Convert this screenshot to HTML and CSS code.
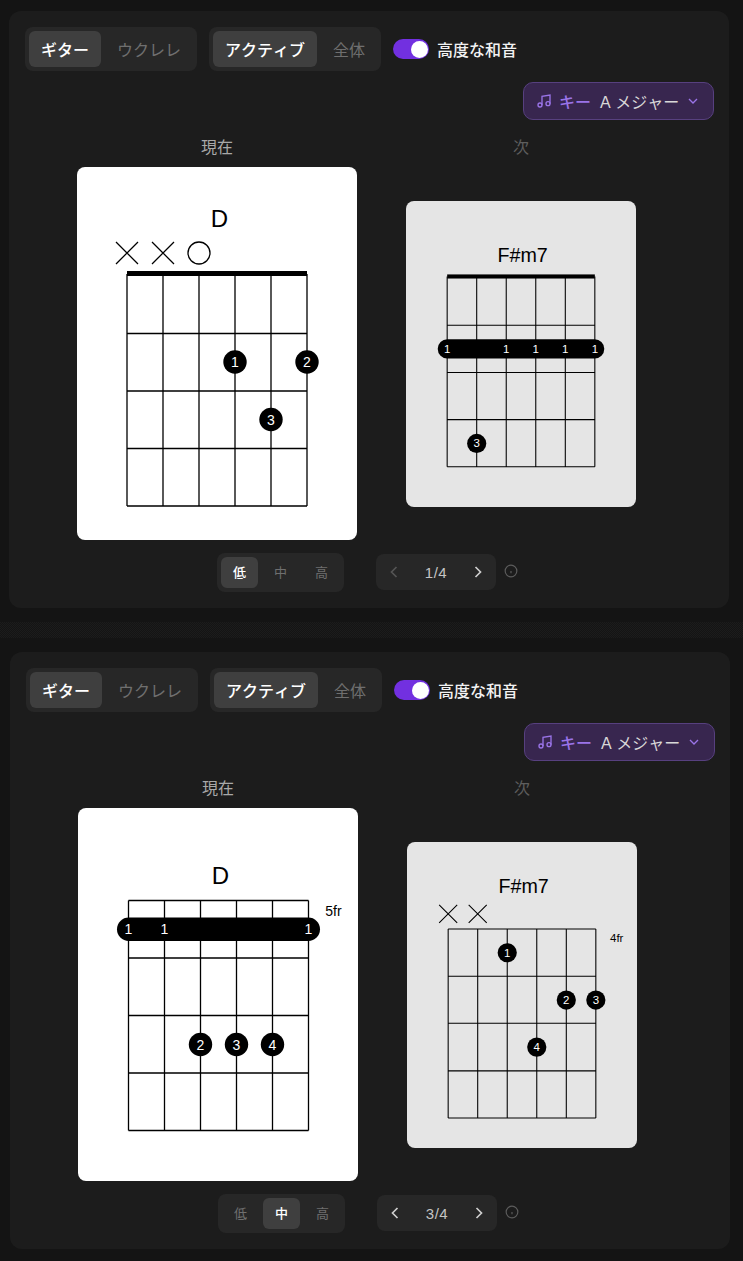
FILE: index.html
```html
<!DOCTYPE html>
<html lang="ja">
<head>
    <meta charset="UTF-8">
    <title>コード</title>
    <link rel="stylesheet" href="styles.css">
</head>
<body>

<section class="panel panel-first">
    <div class="toolbar">
        <div class="seg">
            <button class="seg-btn active">ギター</button>
            <button class="seg-btn">ウクレレ</button>
        </div>
        <div class="seg">
            <button class="seg-btn active">アクティブ</button>
            <button class="seg-btn">全体</button>
        </div>
        <span class="toggle"><span class="knob"></span></span>
        <span class="toggle-label">高度な和音</span>
    </div>
    <div class="key-row">
        <button class="key-btn">
            <svg class="key-icon" viewBox="0 0 24 24"><path d="M9 18V5l12-2v13"/><circle cx="6" cy="18" r="3"/><circle cx="18" cy="16" r="3"/></svg>
            <span class="key-word">キー</span>
            <span class="key-name">A メジャー</span>
            <svg class="key-chevron" viewBox="0 0 24 24"><path d="m6 9 6 6 6-6"/></svg>
        </button>
    </div>
    <div class="chords">
        <div class="chord-label">現在</div>
        <div class="chord-label next">次</div>
        <div class="card">
            <svg class="diagram" viewBox="0 0 280 373">
                <text class="title" x="142.5" y="51">D</text>
                <path class="mute" d="M39 75l22 22M61 75l-22 22M75 75l22 22M97 75l-22 22"/>
                <circle class="open" cx="122" cy="86" r="11"/>
                <rect class="nut" x="50" y="104" width="180" height="5"/>
                <path class="grid" d="M50 107V339M86 107V339M122 107V339M158 107V339M194 107V339M230 107V339M50 166.5H230M50 224H230M50 281.5H230M50 339H230"/>
                <circle class="dot" cx="158" cy="195" r="11.7"/><text class="num" x="158" y="195">1</text>
                <circle class="dot" cx="230" cy="195" r="11.7"/><text class="num" x="230" y="195">2</text>
                <circle class="dot" cx="194" cy="252.5" r="11.7"/><text class="num" x="194" y="252.5">3</text>
            </svg>
        </div>
        <div class="card card-next">
            <svg class="diagram" viewBox="0 0 280 373">
                <text class="title" x="142" y="66">F#m7</text>
                <rect class="nut" x="50" y="89.5" width="180" height="5"/>
                <path class="grid" d="M50 92V324M86 92V324M122 92V324M158 92V324M194 92V324M230 92V324M50 151.5H230M50 209H230M50 266.5H230M50 324H230"/>
                <rect class="barre" x="38.5" y="168.5" width="203" height="23.5" rx="11.7"/>
                <text class="num" x="50" y="180">1</text>
                <text class="num" x="122" y="180">1</text>
                <text class="num" x="158" y="180">1</text>
                <text class="num" x="194" y="180">1</text>
                <text class="num" x="230" y="180">1</text>
                <circle class="dot" cx="86" cy="295.5" r="11.7"/><text class="num" x="86" y="295.5">3</text>
            </svg>
        </div>
    </div>
    <div class="footer">
        <div class="seg seg-small">
            <button class="seg-btn active">低</button>
            <button class="seg-btn">中</button>
            <button class="seg-btn">高</button>
        </div>
        <div class="pager">
            <svg class="pager-icon off" viewBox="0 0 24 24"><path d="m15 18-6-6 6-6"/></svg>
            <span class="pager-text">1/4</span>
            <svg class="pager-icon" viewBox="0 0 24 24"><path d="m9 18 6-6-6-6"/></svg>
        </div>
        <svg class="info" viewBox="0 0 24 24"><circle cx="12" cy="12" r="10"/><path d="M12 16v-4M12 8h.01"/></svg>
    </div>
</section>

<div class="divider"></div>

<section class="panel panel-second">
    <div class="toolbar">
        <div class="seg">
            <button class="seg-btn active">ギター</button>
            <button class="seg-btn">ウクレレ</button>
        </div>
        <div class="seg">
            <button class="seg-btn active">アクティブ</button>
            <button class="seg-btn">全体</button>
        </div>
        <span class="toggle"><span class="knob"></span></span>
        <span class="toggle-label">高度な和音</span>
    </div>
    <div class="key-row">
        <button class="key-btn">
            <svg class="key-icon" viewBox="0 0 24 24"><path d="M9 18V5l12-2v13"/><circle cx="6" cy="18" r="3"/><circle cx="18" cy="16" r="3"/></svg>
            <span class="key-word">キー</span>
            <span class="key-name">A メジャー</span>
            <svg class="key-chevron" viewBox="0 0 24 24"><path d="m6 9 6 6 6-6"/></svg>
        </button>
    </div>
    <div class="chords">
        <div class="chord-label">現在</div>
        <div class="chord-label next">次</div>
        <div class="card">
            <svg class="diagram" viewBox="0 0 280 373">
                <text class="title" x="142.5" y="67.5">D</text>
                <path class="grid" d="M50.5 92.5V322.5M86.5 92.5V322.5M122.5 92.5V322.5M158.5 92.5V322.5M194.5 92.5V322.5M230.5 92.5V322.5M50.5 92.5H230.5M50.5 150H230.5M50.5 207.5H230.5M50.5 265H230.5M50.5 322.5H230.5"/>
                <rect class="barre" x="39" y="109.5" width="203" height="23.5" rx="11.7"/>
                <text class="num" x="50.5" y="121">1</text>
                <text class="num" x="86.5" y="121">1</text>
                <text class="num" x="230.5" y="121">1</text>
                <circle class="dot" cx="122.5" cy="236.5" r="11.7"/><text class="num" x="122.5" y="236.5">2</text>
                <circle class="dot" cx="158.5" cy="236.5" r="11.7"/><text class="num" x="158.5" y="236.5">3</text>
                <circle class="dot" cx="194.5" cy="236.5" r="11.7"/><text class="num" x="194.5" y="236.5">4</text>
                <text class="fret" x="255.5" y="103">5fr</text>
            </svg>
        </div>
        <div class="card card-next">
            <svg class="diagram" viewBox="0 0 280 373">
                <text class="title" x="142" y="54">F#m7</text>
                <path class="mute" d="M39 76.5l22 22M61 76.5l-22 22M75 76.5l22 22M97 76.5l-22 22"/>
                <path class="grid" d="M50 106V336.5M86 106V336.5M122 106V336.5M158 106V336.5M194 106V336.5M230 106V336.5M50 106H230M50 163.7H230M50 221H230M50 279H230M50 336.5H230"/>
                <circle class="dot" cx="122" cy="135" r="11.7"/><text class="num" x="122" y="135">1</text>
                <circle class="dot" cx="194" cy="192.7" r="11.7"/><text class="num" x="194" y="192.7">2</text>
                <circle class="dot" cx="230" cy="192.7" r="11.7"/><text class="num" x="230" y="192.7">3</text>
                <circle class="dot" cx="158" cy="250" r="11.7"/><text class="num" x="158" y="250">4</text>
                <text class="fret" x="255.5" y="117.5">4fr</text>
            </svg>
        </div>
    </div>
    <div class="footer">
        <div class="seg seg-small">
            <button class="seg-btn">低</button>
            <button class="seg-btn active">中</button>
            <button class="seg-btn">高</button>
        </div>
        <div class="pager">
            <svg class="pager-icon" viewBox="0 0 24 24"><path d="m15 18-6-6 6-6"/></svg>
            <span class="pager-text">3/4</span>
            <svg class="pager-icon" viewBox="0 0 24 24"><path d="m9 18 6-6-6-6"/></svg>
        </div>
        <svg class="info" viewBox="0 0 24 24"><circle cx="12" cy="12" r="10"/><path d="M12 16v-4M12 8h.01"/></svg>
    </div>
</section>

</body>
</html>
```

FILE: styles.css
```css
* {
    box-sizing: border-box;
}

body {
    margin: 0;
    padding: 11px 0 12px;
    background: #141414;
    font-family: "Liberation Sans", "Noto Sans CJK JP", sans-serif;
    font-kerning: none;
    color: #fff;
}

button {
    font: inherit;
    border: none;
    background: none;
    color: inherit;
    padding: 0;
}

.panel {
    width: 720px;
    height: 597px;
    padding: 16px;
    background: #1c1c1c;
    border-radius: 12px;
}

.panel-first {
    margin-left: 9px;
}

.panel-second {
    margin-left: 10px;
}

.divider {
    height: 16px;
    margin: 14px 0;
    background: repeating-conic-gradient(#141414 0 25%, #1c1c1c 0 50%) 0 0 / 2px 2px;
}

.toolbar {
    display: flex;
    align-items: center;
    gap: 12px;
}

.seg {
    display: flex;
    gap: 4px;
    padding: 4px;
    background: #272727;
    border-radius: 8px;
}

.seg-btn {
    height: 36px;
    padding: 0 12px;
    border-radius: 6px;
    font-size: 16px;
    font-weight: 400;
    color: #6f6f6f;
}

.seg-btn.active {
    background: #3f3f3f;
    font-weight: 500;
    color: #fff;
}

.toggle {
    display: flex;
    align-items: center;
    justify-content: flex-end;
    width: 36px;
    height: 20px;
    padding-right: 1px;
    background: #7230e0;
    border-radius: 10px;
}

.knob {
    width: 17px;
    height: 17px;
    background: #fff;
    border-radius: 50%;
}

.toggle-label {
    margin-left: -4px;
    font-size: 16px;
    font-weight: 500;
    color: #f2f2f2;
}

.key-row {
    display: flex;
    justify-content: flex-end;
    margin-top: 11px;
    margin-right: -1px;
}

.key-btn {
    display: flex;
    align-items: center;
    width: 191px;
    height: 38px;
    padding: 0 12px;
    background: #38264f;
    border: 1px solid #57407f;
    border-radius: 10px;
    font-size: 16px;
    font-kerning: none;
}

.key-icon {
    width: 16px;
    height: 16px;
    fill: none;
    stroke: #9a74e8;
    stroke-width: 2;
}

.key-word {
    margin-left: 7px;
    font-weight: 500;
    color: #9a74e8;
}

.key-name {
    margin-left: 9px;
    color: #d8d8d8;
}

.key-chevron {
    width: 16px;
    height: 16px;
    margin-left: auto;
    fill: none;
    stroke: #9a74e8;
    stroke-width: 2;
}

.chords {
    display: grid;
    grid-template-columns: 280px 230px;
    column-gap: 49px;
    justify-items: center;
    align-items: center;
    margin: 16px 0 0 52px;
}

.chord-label {
    height: 24px;
    margin-bottom: 7px;
    font-size: 16px;
    line-height: 24px;
    color: #a8a8a8;
}

.chord-label.next {
    color: #5e5e5e;
}

.card {
    width: 280px;
    height: 373px;
    background: #fff;
    border-radius: 8px;
}

.card-next {
    width: 230px;
    height: 306px;
    background: #e5e5e5;
}

.diagram {
    display: block;
    width: 100%;
    height: 100%;
}

.title {
    font-size: 24px;
    text-anchor: middle;
    dominant-baseline: central;
    fill: #000;
}

.grid {
    fill: none;
    stroke: #000;
    stroke-width: 1.3;
}

.mute {
    fill: none;
    stroke: #000;
    stroke-width: 1.3;
}

.open {
    fill: none;
    stroke: #000;
    stroke-width: 1.3;
}

.nut, .dot, .barre {
    fill: #000;
}

.num {
    font-size: 14px;
    text-anchor: middle;
    dominant-baseline: central;
    fill: #fff;
}

.fret {
    font-size: 14px;
    text-anchor: middle;
    dominant-baseline: central;
    fill: #000;
}

.footer {
    display: flex;
    align-items: center;
    margin: 13px 0 0 192px;
}

.seg-small {
    height: 39px;
    padding: 4px;
}

.seg-small .seg-btn {
    width: 37px;
    height: 31px;
    padding: 0 0 2px;
    font-size: 13px;
}

.pager {
    display: flex;
    align-items: center;
    justify-content: space-between;
    width: 120px;
    height: 36px;
    margin: 0 0 1px 32px;
    padding: 0 8px;
    background: #272727;
    border-radius: 8px;
}

.pager-icon {
    width: 20px;
    height: 20px;
    fill: none;
    stroke: #d0d0d0;
    stroke-width: 2;
}

.pager-icon.off {
    stroke: #555;
}

.pager-text {
    font-size: 15px;
    letter-spacing: 0.5px;
    color: #c4c4c4;
}

.info {
    width: 14px;
    height: 14px;
    margin: 0 0 3px 8px;
    fill: none;
    stroke: #5c5c5c;
    stroke-width: 2;
}
```
